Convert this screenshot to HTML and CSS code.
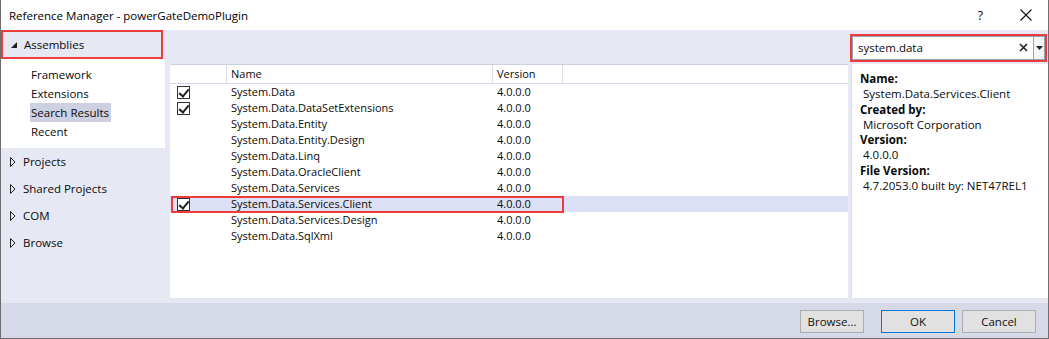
FILE: index.html
```html
<!DOCTYPE html>
<html lang="en">
<head>
  <meta charset="UTF-8">
  <title>Reference Manager - powerGateDemoPlugin</title>
  <link rel="stylesheet" href="styles.css">
</head>
<body>
  <div class="window">
    <div class="titlebar">
      <span class="title">Reference Manager - powerGateDemoPlugin</span>
      <span class="help">?</span>
      <svg class="close" width="12" height="12" viewBox="0 0 12 12">
        <path d="M0.5 0.5 L11.5 11.5 M11.5 0.5 L0.5 11.5" stroke="#111" stroke-width="1.1" fill="none"/>
      </svg>
    </div>

    <div class="body">
      <div class="sidebar">
        <div class="group-head open">
          <svg class="tri" width="7" height="7" viewBox="0 0 7 7"><path d="M6 0 L6 6 L0 6 Z" fill="#1e1e1e"/></svg>
          <span>Assemblies</span>
        </div>
        <div class="sub-items">
          <div class="sub-item">Framework</div>
          <div class="sub-item">Extensions</div>
          <div class="sub-item active">Search Results</div>
          <div class="sub-item">Recent</div>
        </div>
        <div class="group-head">
          <svg class="tri-out" width="6" height="10" viewBox="0 0 6 10"><path d="M0.5 0.5 L5 5 L0.5 9.5 Z" fill="none" stroke="#1e1e1e" stroke-width="1"/></svg>
          <span>Projects</span>
        </div>
        <div class="group-head">
          <svg class="tri-out" width="6" height="10" viewBox="0 0 6 10"><path d="M0.5 0.5 L5 5 L0.5 9.5 Z" fill="none" stroke="#1e1e1e" stroke-width="1"/></svg>
          <span>Shared Projects</span>
        </div>
        <div class="group-head">
          <svg class="tri-out" width="6" height="10" viewBox="0 0 6 10"><path d="M0.5 0.5 L5 5 L0.5 9.5 Z" fill="none" stroke="#1e1e1e" stroke-width="1"/></svg>
          <span>COM</span>
        </div>
        <div class="group-head">
          <svg class="tri-out" width="6" height="10" viewBox="0 0 6 10"><path d="M0.5 0.5 L5 5 L0.5 9.5 Z" fill="none" stroke="#1e1e1e" stroke-width="1"/></svg>
          <span>Browse</span>
        </div>
      </div>

      <div class="main">
        <div class="toolbar">
          <div class="search">
            <div class="search-inner">
              <span class="search-text">system.data</span>
              <svg class="clear" width="9" height="9" viewBox="0 0 9 9"><path d="M1 1 L8 8 M8 1 L1 8" stroke="#222" stroke-width="1.6"/></svg>
              <div class="drop">
                <svg width="7" height="4" viewBox="0 0 7 4"><path d="M0 0 L7 0 L3.5 4 Z" fill="#222"/></svg>
              </div>
            </div>
          </div>
        </div>

        <div class="panes">
          <div class="list">
            <div class="list-head">
              <div class="col-check"></div>
              <div class="col-name">Name</div>
              <div class="col-version">Version</div>
              <div class="col-rest"></div>
            </div>
            <div class="rows">
              <div class="row"><div class="col-check"><span class="checkbox checked"></span></div><div class="col-name">System.Data</div><div class="col-version">4.0.0.0</div></div>
              <div class="row"><div class="col-check"><span class="checkbox checked"></span></div><div class="col-name">System.Data.DataSetExtensions</div><div class="col-version">4.0.0.0</div></div>
              <div class="row"><div class="col-check"></div><div class="col-name">System.Data.Entity</div><div class="col-version">4.0.0.0</div></div>
              <div class="row"><div class="col-check"></div><div class="col-name">System.Data.Entity.Design</div><div class="col-version">4.0.0.0</div></div>
              <div class="row"><div class="col-check"></div><div class="col-name">System.Data.Linq</div><div class="col-version">4.0.0.0</div></div>
              <div class="row"><div class="col-check"></div><div class="col-name">System.Data.OracleClient</div><div class="col-version">4.0.0.0</div></div>
              <div class="row"><div class="col-check"></div><div class="col-name">System.Data.Services</div><div class="col-version">4.0.0.0</div></div>
              <div class="row selected"><div class="col-check"><span class="checkbox checked"></span></div><div class="col-name">System.Data.Services.Client</div><div class="col-version">4.0.0.0</div><div class="mark"></div></div>
              <div class="row"><div class="col-check"></div><div class="col-name">System.Data.Services.Design</div><div class="col-version">4.0.0.0</div></div>
              <div class="row"><div class="col-check"></div><div class="col-name">System.Data.SqlXml</div><div class="col-version">4.0.0.0</div></div>
            </div>
          </div>

          <div class="details">
            <div class="label">Name:</div>
            <div class="value">System.Data.Services.Client</div>
            <div class="label">Created by:</div>
            <div class="value">Microsoft Corporation</div>
            <div class="label">Version:</div>
            <div class="value">4.0.0.0</div>
            <div class="label">File Version:</div>
            <div class="value">4.7.2053.0 built by: NET47REL1</div>
          </div>
        </div>
      </div>
    </div>

    <div class="footer">
      <button class="btn">Browse...</button>
      <button class="btn default">OK</button>
      <button class="btn">Cancel</button>
    </div>
  </div>
</body>
</html>
```

FILE: styles.css
```css
* {
  box-sizing: border-box;
}

body {
  margin: 0;
  padding: 0;
  font-family: 'Segoe UI', 'Open Sans', 'Noto Sans', sans-serif;
  font-size: 11px;
  color: #0a0a0a;
  background: #ffffff;
}

.window {
  width: 1049px;
  height: 339px;
  border: 1px solid #6e6e6e;
  border-top: none;
  display: flex;
  flex-direction: column;
  background: #e6e8f4;
}

/* title bar */

.titlebar {
  height: 30px;
  background: #ffffff;
  display: flex;
  align-items: center;
  padding: 0 16px 0 8px;
}

.title {
  flex: 1;
  color: #000;
  font-size: 11.5px;
}

.help {
  font-size: 13px;
  margin-right: 37px;
  color: #111;
}

.close {
  display: block;
}

/* main body */

.body {
  flex: 1;
  display: flex;
  min-height: 0;
}

.sidebar {
  width: 164px;
  display: flex;
  flex-direction: column;
}

.group-head {
  height: 27px;
  display: flex;
  align-items: center;
  padding-left: 9px;
  gap: 7px;
  font-size: 11.5px;
}

.group-head.open {
  height: 29px;
  border: 2px solid #ee3b3b;
  width: 162px;
  padding-left: 8px;
  gap: 6px;
}

.group-head .tri {
  margin-top: 1px;
}

.sub-items {
  background: #ffffff;
  padding: 6px 0 7px 29px;
}

.sub-items .sub-item {
  display: block;
  width: max-content;
  height: 19px;
  line-height: 19px;
  padding: 0 2px 0 1px;
  font-size: 11.5px;
}

.sub-item.active {
  background: #ccd0e0;
}

.main {
  flex: 1;
  display: flex;
  flex-direction: column;
  padding: 0 0 5px 5px;
  min-width: 0;
}

.toolbar {
  height: 34px;
  display: flex;
  justify-content: flex-end;
  align-items: center;
  padding-right: 1px;
}

.search {
  width: 197px;
  height: 28px;
  border: 2px solid #ee3b3b;
  margin-top: 1px;
}

.search-inner {
  height: 100%;
  background: #ffffff;
  border: 1px solid #9aa1b4;
  display: flex;
  align-items: center;
  padding-left: 5px;
  font-size: 11.5px;
}

.search-text {
  flex: 1;
}

.clear {
  margin-right: 5px;
}

.drop {
  width: 11px;
  height: 100%;
  border-left: 1px solid #9aa1b4;
  display: flex;
  align-items: center;
  justify-content: center;
  background: #f4f5f9;
}

.panes {
  flex: 1;
  display: flex;
  gap: 3px;
  min-height: 0;
}

/* reference list */

.list {
  width: 678px;
  background: #ffffff;
  border-top: 1px solid #cdd1e2;
}

.list-head {
  display: flex;
  height: 19px;
  border-bottom: 1px solid #d4d8ea;
  align-items: stretch;
}

.list-head > div {
  border-right: 1px solid #dcdfea;
  line-height: 18px;
}

.col-check {
  width: 57px;
  flex: none;
  padding-left: 7px;
  display: flex;
  align-items: center;
}

.col-name {
  width: 266px;
  flex: none;
  padding-left: 4px;
}

.col-version {
  width: 70px;
  flex: none;
  padding-left: 4px;
}

.list-head .col-rest {
  flex: 1;
  border-right: none;
}

.row {
  display: flex;
  height: 16px;
  line-height: 16px;
  position: relative;
}

.row.selected {
  background: #dde1f7;
}

.row .mark {
  position: absolute;
  left: 1px;
  top: 0;
  width: 393px;
  height: 17px;
  border: 2px solid #ee3b3b;
}

.checkbox {
  width: 13px;
  height: 13px;
  border: 1px solid #333;
  background: #ffffff;
  display: block;
  position: relative;
}

.checkbox.checked::after {
  content: "";
  position: absolute;
  left: 3px;
  top: 0px;
  width: 4px;
  height: 8px;
  border-right: 2px solid #222;
  border-bottom: 2px solid #222;
  transform: rotate(40deg);
}

/* details pane */

.details {
  flex: 1;
  background: #ffffff;
  border-left: 1px solid #dcdfee;
  padding: 7px 8px;
  line-height: 15.3px;
  font-size: 11.5px;
}

.label {
  font-weight: bold;
}

.value {
  padding-left: 3px;
}

/* footer */

.footer {
  height: 35px;
  background: #d6dae8;
  display: flex;
  justify-content: flex-end;
  align-items: center;
  gap: 7px;
  padding-right: 12px;
  padding-top: 2px;
}

.btn {
  height: 23px;
  width: 74px;
  background: #e1e1e1;
  border: 1px solid #adadad;
  font-family: inherit;
  font-size: 11.5px;
  color: #111;
  padding: 0;
}

.btn:first-child {
  width: 64px;
  margin-right: 10px;
}

.btn.default {
  border-color: #0078d7;
}
```
